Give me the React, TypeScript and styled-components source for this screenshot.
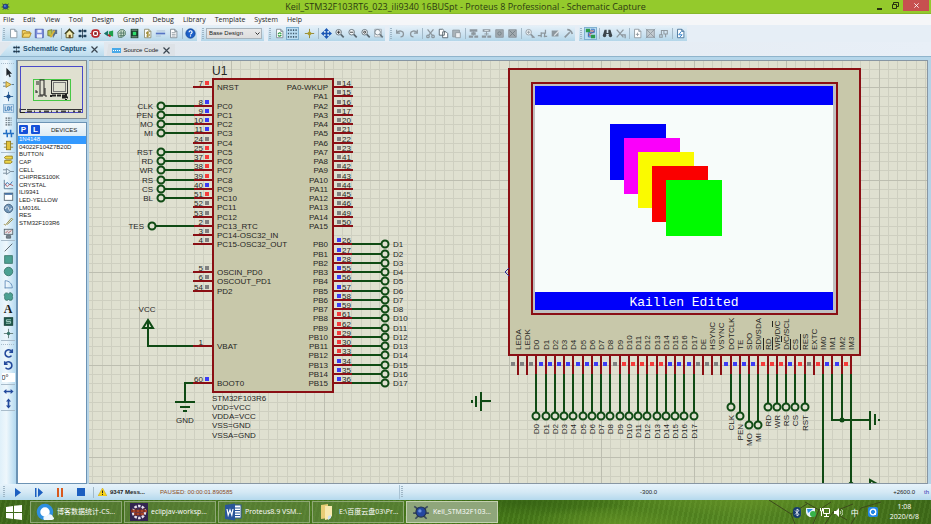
import React from "react";
import styled, { createGlobalStyle, css } from "styled-components";

const GlobalStyle = createGlobalStyle`
  * { box-sizing: border-box; }
  html, body, #root { height: 100%; }
  body { margin: 0; overflow: hidden; font-family: "Open Sans", "Noto Sans CJK SC", sans-serif; color: #1c1c1c; }
  button, input, select { font: inherit; color: inherit; }
  button { border: 0; padding: 0; background: none; }
  ul { margin: 0; padding: 0; list-style: none; }
`;

/* ---------- shell ---------- */

const Window = styled.div`
  display: flex;
  flex-direction: column;
  height: 100vh;
  background: #e6eef6;
`;

const TitleBar = styled.header`
  display: grid;
  grid-template-columns: 1fr auto 1fr;
  align-items: center;
  height: 14px;
  background: #94ca2c;
  border-bottom: 1px solid #86b72b;
`;

const Title = styled.h1`
  margin: 0;
  font-size: 9px;
  line-height: 13px;
  font-weight: 400;
  color: #2c3a12;
  white-space: nowrap;
`;

const TitleIcon = styled.span`
  display: flex;
  padding-left: 1px;
`;

const WindowControls = styled.div`
  display: flex;
  justify-content: flex-end;
  align-self: start;
  padding-right: 2px;
`;

const ControlButton = styled.button<{ $close?: boolean }>`
  display: flex;
  align-items: center;
  justify-content: center;
  width: ${(p) => (p.$close ? 26 : 16)}px;
  height: 11px;
  background: ${(p) => (p.$close ? "#c75050" : "transparent")};
`;

const MenuBar = styled.nav`
  display: flex;
  gap: 9px;
  height: 11px;
  padding-left: 3px;
  background: #f5f6f8;
`;

const MenuItem = styled.button`
  font-size: 7px;
  line-height: 11px;
  white-space: nowrap;
`;

const ToolbarRow = styled.div`
  display: flex;
  gap: 4px;
  height: 17px;
  padding: 1px 0 1px 2px;
`;

const ToolGroup = styled.div`
  display: flex;
  align-items: center;
  background: linear-gradient(#e4f0f8, #cfe4f2 50%, #b3d6e9);
`;

const Grip = styled.span`
  width: 2px;
  height: 12px;
  margin: 0 2px 0 1px;
  background: repeating-linear-gradient(#9fb6c6 0 1px, transparent 1px 2px);
`;

const Divider = styled.span`
  width: 1px;
  height: 11px;
  margin: 0 1px 0 2px;
  background: #a3b9c8;
`;

const Spacer = styled.span`
  width: 4px;
`;

const ToolButton = styled.button<{ $on?: boolean }>`
  display: flex;
  align-items: center;
  justify-content: center;
  width: 13px;
  height: 13px;
  ${(p) =>
    p.$on &&
    css`
      background: #b9dcf2;
      outline: 1px solid #7fb0d0;
      outline-offset: -1px;
    `}
`;

const DesignSelect = styled.select`
  appearance: none;
  width: 56px;
  height: 11px;
  margin-right: 2px;
  padding: 0 0 0 2px;
  border: 1px solid #a9b4bc;
  border-radius: 0;
  font-family: "Liberation Sans", sans-serif;
  font-size: 6px;
  line-height: 9px;
  background: linear-gradient(#e8e8e8, #dedede);
`;

const SelectBox = styled.label`
  display: flex;
  position: relative;
`;

const SelectArrow = styled.svg`
  position: absolute;
  right: 4px;
  top: 4px;
  pointer-events: none;
`;

const Tabs = styled.div`
  display: flex;
  align-items: flex-end;
  gap: 2px;
  height: 14px;
  background: linear-gradient(90deg, #e1e7ed, #e8eff7);
`;

const Tab = styled.div<{ $active?: boolean }>`
  display: flex;
  align-items: center;
  gap: 2px;
  height: ${(p) => (p.$active ? 14 : 12)}px;
  padding: ${(p) => (p.$active ? "0 6px 0 12px" : "0 5px 0 6px")};
  background: ${(p) => (p.$active ? "linear-gradient(#e3f2fb, #bcdcee)" : "#dde2e7")};
  clip-path: ${(p) =>
    p.$active ? "polygon(12px 0, 100% 0, 100% 100%, 0 100%)" : "polygon(2px 0, 100% 0, 100% 100%, 0 100%)"};
`;

const TabLabel = styled.button<{ $active?: boolean }>`
  font-family: "Liberation Sans", sans-serif;
  font-size: ${(p) => (p.$active ? 7 : 6)}px;
  font-weight: ${(p) => (p.$active ? 700 : 400)};
  line-height: 12px;
  color: ${(p) => (p.$active ? "#1f5273" : "#1c1c1c")};
  white-space: nowrap;
`;

const TabClose = styled.button`
  display: flex;
  margin-left: 3px;
`;

const TabStrip = styled.div`
  height: 4px;
  background: #b5d6ea;
  border-top: 1px solid #8fb4cc;
`;

const Main = styled.main`
  display: flex;
  flex: 1;
  min-height: 0;
  background: #b5d3e6;
`;

/* ---------- left side ---------- */

const Palette = styled.aside`
  width: 16px;
  flex: none;
  overflow: hidden;
  background: linear-gradient(90deg, #dff0fa, #eef7fc 40%, #b3d9f0);
`;

const PaletteGrip = styled.div`
  height: 3px;
  margin: 2px 1px 1px;
  background: repeating-linear-gradient(90deg, #a9bccb 0 1px, transparent 1px 2px) center / 100% 1px no-repeat;
`;

const PaletteGroup = styled.div<{ $height: number }>`
  display: grid;
  grid-auto-rows: 1fr;
  justify-items: center;
  align-items: center;
  height: ${(p) => p.$height}px;
  margin: 0 1px;
  border-bottom: 1px solid #a9bccb;
`;

const PaletteButton = styled(ToolButton)`
  height: 12px;
`;

const AngleInput = styled.input`
  width: 13px;
  height: 9px;
  padding: 0;
  border: 0;
  font-size: 7px;
  line-height: 9px;
  background: #fff;
`;

const Explorer = styled.section`
  display: flex;
  flex-direction: column;
  gap: 3px;
  width: 71px;
  flex: none;
  border-left: 1px solid #6c93b4;
`;

const Preview = styled.div`
  height: 59px;
  border: 1px solid #7f8c94;
  background: #dfe0d0;
`;

const DevicePanel = styled.div`
  flex: 1;
  border: 1px solid #6c93b4;
  background: #fff;
`;

const DeviceHead = styled.div`
  display: flex;
  align-items: center;
  gap: 3px;
  height: 13px;
  padding-left: 1px;
  background: linear-gradient(#f4f9fc, #dcebf4);
`;

const BlueButton = styled.button`
  width: 9px;
  height: 9px;
  border-radius: 1px;
  background: #1450d8;
  color: #fff;
  font-family: "Liberation Sans", sans-serif;
  font-size: 8px;
  font-weight: 700;
  line-height: 9px;
`;

const DeviceTitle = styled.h2`
  margin: 0 0 0 8px;
  font-family: "Liberation Sans", sans-serif;
  font-size: 6px;
  font-weight: 400;
`;

const DeviceList = styled.ul`
  display: grid;
  grid-auto-rows: 1fr;
  height: 91px;
`;

const DeviceRow = styled.button<{ $selected?: boolean }>`
  display: block;
  width: 100%;
  height: 100%;
  padding-left: 1px;
  text-align: left;
  font-family: "Liberation Sans", sans-serif;
  font-size: 6px;
  line-height: 7px;
  white-space: nowrap;
  color: ${(p) => (p.$selected ? "#fff" : "#1c1c1c")};
  background: ${(p) => (p.$selected ? "#3399ff" : "transparent")};
`;

const Canvas = styled.section`
  flex: 1;
  min-width: 0;
  margin: 0 3px 0 2px;
  border: 1px solid #8796a3;
  border-left: 0;
  overflow: hidden;
  background: #dfe0d0;
`;

const Sheet = styled.svg`
  display: block;
  width: 100%;
  height: 100%;
  font-family: "Liberation Sans", sans-serif;
  font-size: 8px;
  fill: #26261f;
`;

/* ---------- bottom ---------- */

const StatusBar = styled.footer`
  display: grid;
  grid-template-columns: 157px 1fr auto;
  align-items: center;
  height: 16px;
  padding: 0 2px;
  background: linear-gradient(#e6f3fb, #d5e9f5 50%, #b5d9ed);
  font-family: "Liberation Sans", sans-serif;
  font-size: 6px;
  line-height: 14px;
`;

const Transport = styled.div`
  display: flex;
  align-items: center;
`;

const PlayButton = styled.button`
  display: flex;
  justify-content: center;
  width: 21px;
`;

const Messages = styled.button`
  display: flex;
  align-items: center;
  gap: 3px;
  padding-left: 3px;
  font-weight: 700;
  white-space: nowrap;
`;

const StatusMiddle = styled.div`
  display: grid;
  grid-template-columns: 240px 1fr;
  align-items: center;
`;

const SimState = styled.span`
  padding-left: 1px;
  color: #8a4a1c;
`;

const CoordX = styled.span`
  display: flex;
  align-items: center;
  justify-content: space-between;
  padding-right: 236px;
  border-left: 1px solid #a9c3d4;
`;

const CoordY = styled.span`
  display: flex;
  gap: 9px;
`;

const Unit = styled.span`
  color: #3232b4;
`;

const Taskbar = styled.footer`
  position: relative;
  display: flex;
  align-items: center;
  gap: 2px;
  height: 24px;
  background:
    radial-gradient(90px 18px at 66% 100%, #6f9c2a99, transparent),
    radial-gradient(120px 14px at 56% 10%, #2f5a1299, transparent),
    radial-gradient(140px 16px at 80% 0, #6a962999, transparent),
    repeating-linear-gradient(102deg, #ffffff08 0 2px, #00000010 2px 5px),
    linear-gradient(90deg, #3f6b1a, #4b7c1f 30%, #467a18 55%, #578a22 80%, #3f6c18);
  color: #fff;
`;

const Branches = styled.svg`
  position: absolute;
  right: 30px;
  top: 0;
`;

const StartButton = styled.button`
  display: flex;
  justify-content: center;
  width: 28px;
`;

const TaskButton = styled.button<{ $active?: boolean }>`
  display: flex;
  align-items: center;
  gap: 3px;
  width: 92px;
  height: 22px;
  padding: 0 2px 0 5px;
  border: 1px solid ${(p) => (p.$active ? "#c3d0b0" : "#8fa876")};
  background: ${(p) => (p.$active ? "#8fa67b" : "#65874680")};
  font-size: 7px;
  line-height: 20px;
  white-space: nowrap;
`;

const TaskText = styled.span`
  flex: none;
`;

const Tray = styled.div`
  position: relative;
  display: flex;
  align-items: center;
  margin-left: auto;
  padding-right: 12px;
`;

const TrayButton = styled.button`
  display: flex;
  align-items: center;
  justify-content: center;
  width: 14px;
  height: 14px;
  font-size: 8px;
`;

const TrayWide = styled(TrayButton)`
  width: 18px;
`;

const Clock = styled.time`
  display: grid;
  margin-left: 8px;
  font-size: 7px;
  line-height: 10px;
  text-align: center;
`;

/* ---------- icons ---------- */

const G = "#8d979e";
const D = "#3d464c";

const page = (c: string) => <path d="M3 1.5h5l2.5 2.5v7.5h-7.5z M8 1.5v2.5h2.5" fill="#fff" stroke={c} />;
const lens = (c: string, inner?: React.ReactNode) => (
  <g fill="none" stroke={c}>
    <circle cx="5.5" cy="5" r="3.3" fill="#f3f7fa" />
    <path d="M8 7.5l3.5 3.5" strokeWidth="2" />
    {inner}
  </g>
);
const blocks = (extra: React.ReactNode) => (
  <g fill={G}>
    <path d="M2 1.5h9v3H2zM1 9h5v2.500H1zM7.500 9h4.500v2.500H7.500z" />
    <path d="M6.500 4v5M4 7h5" stroke={G} />
    {extra}
  </g>
);
const ladder = (
  <g>
    <path d="M6.5 1v11" stroke="#223d55" />
    <path d="M2 2h3v3h-3zM8 2h3v3h-3zM2 8h3v3h-3zM8 8h3v3h-3z" fill="#28567a" />
    <path d="M2 3.5h9M2 9.5h9" stroke="#12222e" />
  </g>
);

const icons: Record<string, React.ReactNode> = {
  new: page("#8494a0"),
  open: <path d="M1.5 11V3h4l1 1.5h4V6M1.5 11l2-5h8.500l-2 5z" fill="#f5d465" stroke="#a98425" />,
  save: (
    <g>
      <path d="M1.500 1.500h9.500v10h-9.500z" fill="#7d8fdc" stroke="#4a5bab" />
      <path d="M4 2h5v3.500h-5zM3.500 7.500h6v4h-6z" fill="#edf0fb" />
    </g>
  ),
  close: (
    <g>
      <path d="M1 3l5-1v8l-5-1z" fill="#b7c34a" stroke="#6b7330" />
      <path d="M7 2h5v5h-2l-3 5z" fill="#59708a" />
      <path d="M4 11l5-8" stroke="#d9b53b" strokeWidth="2" />
    </g>
  ),
  home: (
    <g>
      <path d="M2.500 6.500V11.500h8V6.500L6.500 2z" fill="#f4edb4" stroke="#4f4a1b" />
      <path d="M1 7l5.500-5.500L12 7" fill="none" stroke="#3c3d17" strokeWidth="1.500" />
      <path d="M5.500 8h2.500v4h-2.500z" fill="#684a20" />
    </g>
  ),
  ladder,
  pcb: (
    <g>
      <rect x="2.500" y="2.500" width="8" height="8" rx="3" fill="#fff" stroke="#b8262b" strokeWidth="2" />
      <rect x="5" y="5" width="3" height="3" fill="#7c1c21" />
      <path d="M0 6.500h2M11 6.500h2" stroke="#b8262b" />
    </g>
  ),
  viewer: (
    <g>
      <path d="M1 6.500l5-3.500v7z" fill="#1a7466" />
      <path d="M7 4l5-1v7l-5-1z" fill="#20a04c" />
      <path d="M6 8l3 2" stroke="#b8262b" strokeWidth="2" />
    </g>
  ),
  gerber: (
    <g fill="none" stroke="#4a7463">
      <path d="M2 5l3-3h4l2 2v4l-4 3H3z" fill="#cfe0cf" />
      <path d="M3 6h7M4 9h6M6 3v8M9 3v6" />
    </g>
  ),
  chip: (
    <g>
      <rect x="2" y="1" width="9" height="11" fill="#1c3d2d" />
      <path d="M4.500 4.500h4v4h-4z" fill="#2fe06c" />
      <path d="M3 2.500h7M3 10.500h7" stroke="#9db8a8" />
    </g>
  ),
  bill: (
    <g>
      {page("#8a8a6a")}
      <path d="M8.500 5h-3v2h3v2.500h-3.500M6.700 4v7" fill="none" stroke="#957f20" />
    </g>
  ),
  code: (
    <g>
      <path d="M2 3.500h10" stroke="#a8bed0" />
      <path d="M1 6.500h11" stroke="#5674c4" strokeWidth="2" />
      <path d="M1 9.500h6" stroke="#a8bed0" />
    </g>
  ),
  notes: (
    <g>
      {page("#7a868e")}
      <path d="M4.500 5.500h4.500M4.500 7.500h4.500M4.500 9.500h4.500" stroke="#8d979e" />
    </g>
  ),
  help: (
    <g>
      <circle cx="6.500" cy="6.500" r="5.500" fill="#1b5fc9" stroke="#174a97" />
      <path d="M4.800 5c0-2.300 3.600-2.300 3.600 0 0 1.400-1.900 1.400-1.900 2.700M6.500 8.700v1.300" fill="none" stroke="#fff" strokeWidth="1.400" />
    </g>
  ),
  redraw: (
    <g>
      {page("#7a868e")}
      <path d="M5 7.500c0-2 3-2.500 3.500-.5M8.500 8c-.5 2-3 2-3.500.500" fill="none" stroke="#2d9a44" strokeWidth="1.500" />
    </g>
  ),
  grid: <path d="M1 2.500h11M1 6.500h11M1 10.500h11" stroke="#3f586b" strokeWidth="2" strokeDasharray="1.500 1.500" />,
  origin: (
    <g>
      <path d="M6.500 1v11M1 6.500h11" stroke="#8b7a22" />
      <path d="M6.500 3.500l3 3-3 3-3-3z" fill="#a99b2c" />
    </g>
  ),
  pan: (
    <g>
      <path d="M6.500 2v9M2 6.500h9" stroke="#1c57b5" strokeWidth="2" />
      <path d="M6.500 0l3 3.500h-6zM6.500 13l3-3.500h-6zM0 6.500l3.500-3v6zM13 6.500l-3.500-3v6z" fill="#1c57b5" />
    </g>
  ),
  zoomIn: lens("#5b6972", <path d="M3.500 5h4M5.500 3v4" stroke="#222" />),
  zoomOut: lens("#5b6972", <path d="M3.500 5h4" stroke="#222" />),
  zoomAll: lens("#5b6972", <circle cx="5.500" cy="5" r="1.200" stroke="#222" />),
  zoomArea: (
    <g>
      <path d="M2 1.500h8v9h-8z" fill="#fff" stroke="#9aa6ae" />
      {lens("#6a7982")}
    </g>
  ),
  undo: <path d="M2 2v4h4M2.500 5.500c2-3 7.500-2.500 7.500 1.500 0 2-1.500 3.500-3.500 3.500" fill="none" stroke={G} strokeWidth="1.500" />,
  redo: <path d="M11 2v4H7M10.500 5.500C8.500 2.500 3 3 3 7c0 2 1.500 3.500 3.500 3.500" fill="none" stroke={G} strokeWidth="1.500" />,
  cut: (
    <g fill="none" stroke={G} strokeWidth="1.500">
      <path d="M3 1.500l5.500 7M10 1.500l-5.500 7" />
      <circle cx="3.500" cy="10" r="1.500" />
      <circle cx="9.500" cy="10" r="1.500" />
    </g>
  ),
  copy: <path d="M1.500 1.500h4l2 2v5h-6zM5.500 4.500h4l2 2v5h-6z" fill="#fff" stroke="#4d5b66" />,
  paste: (
    <g>
      <path d="M2 2.500h8v8h-8z" fill="#aab3b9" stroke={G} />
      <path d="M5.500 5.500h5.500v6h-5.500z" fill="#eef1f3" stroke={G} />
    </g>
  ),
  blkCopy: blocks(<path d="M4 5h5v3H4z" />),
  blkMove: blocks(<path d="M4 2.500h5v1H4z" fill="#e3eaee" />),
  blkRotate: (
    <g>
      <path d="M2 2h9v9h-9z" fill="#a0a9af" stroke={G} />
      <circle cx="6.500" cy="6.500" r="2" fill="none" stroke="#727c83" />
    </g>
  ),
  blkDelete: (
    <g>
      <path d="M2 2h9v9h-9z" fill="#a0a9af" stroke={G} />
      <path d="M3 3l7 7M10 3l-7 7" stroke="#727c83" />
    </g>
  ),
  pick: lens(G, <path d="M3.500 5h4M5.500 3v4M9 11h4" stroke={G} />),
  make: <path d="M1 9h4M5 5v6M5 6h5v-4M8 10h4M9 6v5" fill="none" stroke={G} strokeWidth="1.500" />,
  pack: (
    <g>
      <path d="M2 3h8v7h-8z" fill={G} />
      <path d="M5 9l6-6" stroke="#e0e5e8" strokeWidth="1.500" />
    </g>
  ),
  decompose: <path d="M2 11l6-6M5 2c3 0 5 2 6 5" fill="none" stroke={G} strokeWidth="2" />,
  autoroute: (
    <g>
      <path d="M1 1h5v4h-5zM7 8h5v4h-5z" fill="#2a9a4b" />
      <path d="M6 3.500h4c2 2-6 3-6 5h3" fill="none" stroke="#b3393d" />
      <path d="M7 1.500h4v4h-7v5h3" fill="none" stroke="#2c62b5" />
    </g>
  ),
  find: (
    <g fill={D}>
      <path d="M3 2h2.500v4h2V2H10l2 7H8V7H5v2H1z" />
      <circle cx="3" cy="9" r="2" />
      <circle cx="10" cy="9" r="2" />
    </g>
  ),
  assign: <path d="M2 2l8 9M10 2L2 11M8 8h4v4" fill="none" stroke={G} strokeWidth="1.500" />,
  addSheet: (
    <g>
      {page(G)}
      <path d="M4.500 7.500h4M6.500 5.500v4" stroke={G} />
    </g>
  ),
  delSheet: <path d="M2 2h9v9h-9zM1 1l11 11M12 1L1 12" fill="#c3cbd0" stroke={G} />,
  parent: <path d="M2 8h3v3h-3zM7 3h4v4h-4zM4 8V3h3M9 7v4" fill="none" stroke={G} strokeWidth="1.200" />,
  netlist: (
    <g>
      {page("#3d6b93")}
      <path d="M7.500 4l-3 4h4l-3 3" fill="none" stroke="#1974c9" />
    </g>
  ),
  select: <path d="M4 1v9.500l2.200-2 1.600 3.500 1.500-.7-1.600-3.300h3z" fill="#20262b" />,
  component: (
    <g>
      <path d="M3.500 3v7l6-3.500z" fill="#efd268" stroke="#a38423" />
      <path d="M0 4.500h3M0 8.500h3M10 6.500h3" stroke="#4a6c87" />
    </g>
  ),
  junction: (
    <g>
      <path d="M6.500 1v11M1 6.500h11" stroke="#245a91" />
      <circle cx="6.500" cy="6.500" r="2.500" fill="#1d4f8c" />
    </g>
  ),
  label: (
    <g fill="none" stroke="#2b6cab">
      <rect x="0.500" y="2" width="12" height="9" fill="#d3e6f5" stroke="#7ba7cc" />
      <path d="M2.500 4v5h2M5.500 4.500h2V8.500h-2zM11 4.500H9.500v4H11" />
    </g>
  ),
  script: <path d="M3 2.500h7M3 5h7M3 8h7M3 10.500h7" stroke="#56626b" strokeWidth="1.300" strokeDasharray="2 1" />,
  bus: <path d="M0 6.500h13M4 2v4.500M9 2v4.500M5 7v4M10 7v4" fill="none" stroke="#2470c4" strokeWidth="1.800" />,
  sub: (
    <g>
      <rect x="4" y="1.500" width="5" height="10" fill="#e2c23a" stroke="#8f7a1c" />
      <path d="M1 4.500h3M1 8.500h3M9 4.500h3M9 8.500h3" stroke="#8f7a1c" />
    </g>
  ),
  terminal: <path d="M3.500 2.500h7.500v3.500h-7.500l-2-1.700zM2 7.500h7l2 1.700-2 1.800H2z" fill="#efd84a" stroke="#8f7a1c" />,
  pin: <path d="M0 4.500h4M0 8.500h4M4 3l5 3.500L4 10zM9 6.500h4" fill="none" stroke="#6d8191" />,
  graph: (
    <g fill="none">
      <path d="M1.500 1v10.500H12" stroke="#50748f" />
      <path d="M2 8l3-4 3 3 3-4" stroke="#2b6cab" />
      <path d="M2 5l3 4 3-3 4 2" stroke="#b5555c" />
    </g>
  ),
  popup: (
    <g>
      <rect x="1.500" y="2.500" width="10" height="8.500" fill="#fff" stroke="#50606b" />
      <path d="M2 3.500h9" stroke="#3d6aa0" strokeWidth="2" />
    </g>
  ),
  generator: (
    <g fill="none">
      <circle cx="6.500" cy="6.500" r="5" fill="#6e93b5" stroke="#41607d" />
      <path d="M3 7c1-4 3-3 3.500-.5s2.500 3 3.500-.5" stroke="#fff" />
    </g>
  ),
  probe: <path d="M1 10.500c1-2 2 2 3-1l6-7 1.500 1.500-6.500 6" fill="none" stroke="#8f8031" />,
  meter: (
    <g>
      <rect x="1.500" y="1.500" width="10" height="6" fill="#dfe6ea" stroke="#54626c" />
      <path d="M3 6l3-3M6 6l4-3" stroke="#b5555c" />
      <path d="M4 9h5v3h-5z" fill="#7b8790" stroke="#54626c" />
    </g>
  ),
  line: <path d="M2 11l9-9" stroke="#4a5359" />,
  box: <rect x="2" y="2" width="9" height="9" fill="#4ca192" stroke="#377368" />,
  circle: <circle cx="6.500" cy="6.500" r="5" fill="#4ca192" stroke="#377368" />,
  arc: <path d="M2.500 11V2c5 0 8.500 4 8.500 8.500H2" fill="none" stroke="#5a87b5" />,
  path: <path d="M6.500 3.500c-1.500-2-5-1.500-5 1.500 0 1 .5 1.500.5 1.500s-1 4.500 2.500 4.500c1.200 0 2-1 2-1s1 1 2.500 1C12 11 11.500 7 11 6.500c1-2-.5-4.500-2.500-4.500-1.200 0-2 1.500-2 1.500z" fill="#4ca192" stroke="#377368" />,
  symbol: (
    <g>
      <rect x="1.500" y="2" width="10" height="9" fill="#1d5a4b" stroke="#153c33" />
      <path d="M9.500 4.500h-5.500v2h5v2h-5.500" fill="none" stroke="#b8ded3" />
    </g>
  ),
  marker: (
    <g>
      <path d="M6.500 1v11M1 6.500h11" stroke="#5b7470" />
      <circle cx="6.500" cy="6.500" r="2" fill="#377368" />
    </g>
  ),
  cw: <path d="M10 4C7.500.5 2.500 2.500 2.500 6.500S8 12 10 9M11 1.500v3.500H7.500" fill="none" stroke="#234a9c" strokeWidth="1.800" />,
  ccw: <path d="M3 4c2.500-3.500 7.500-1.500 7.500 2.500S5 12 3 9M2 1.500v3.500h3.500" fill="none" stroke="#234a9c" strokeWidth="1.800" />,
  flipH: <path d="M0.500 6.500l3.500-3v2h5v-2l3.500 3-3.500 3v-2H4v2z" fill="#234a9c" />,
  flipV: <path d="M6.500.5l3 3.500h-2v5h2l-3 3.500-3-3.500h2V4h-2z" fill="#234a9c" />,
};

const Icon = ({ name, size = 11 }: { name: string; size?: number }) => (
  <svg width={size} height={size} viewBox="0 0 13 13" aria-hidden="true">
    {icons[name]}
  </svg>
);

const LetterTool = styled(PaletteButton)`
  font-family: "Liberation Serif", serif;
  font-size: 12px;
  font-weight: 700;
  line-height: 12px;
`;

const Tools = ({ items, on }: { items: string[]; on?: string }) => (
  <>
    {items.map((t, i) =>
      t === "|" ? <Divider key={i} /> : t === " " ? <Spacer key={i} /> : (
        <ToolButton key={i} $on={t === on} aria-label={t}>
          <Icon name={t} />
        </ToolButton>
      )
    )}
  </>
);

const PaletteTools = ({ items, height }: { items: string[]; height: number }) => (
  <PaletteGroup $height={height}>
    {items.map((t) =>
      t === "text" ? (
        <LetterTool key={t}>A</LetterTool>
      ) : (
        <PaletteButton key={t} aria-label={t}>
          <Icon name={t} />
        </PaletteButton>
      )
    )}
  </PaletteGroup>
);

const Cross = ({ size = 7, color = "#3b4650" }: { size?: number; color?: string }) => (
  <svg width={size} height={size} viewBox="0 0 7 7" aria-hidden="true">
    <path d="M.5.5l6 6M6.500.5l-6 6" stroke={color} strokeWidth="1.200" />
  </svg>
);

/* ---------- schematic ---------- */

const RED = "#8a0f14";
const WIRE = "#0f4a14";
const level: Record<string, string> = { r: "#f53b3b", b: "#3b3bf5", g: "#808080" };

const gx = (k: number) => Math.round(508.700 + 9.250 * k);
const gy = (k: number) => Math.round(87.200 + 9.250 * k);

type Pin = [slot: number, name: string, num: string, state: string, net?: string];

const leftPins: Pin[] = [
  [0, "NRST", "7", "r"],
  [2, "PC0", "8", "b", "CLK"],
  [3, "PC1", "9", "b", "PEN"],
  [4, "PC2", "10", "b", "MO"],
  [5, "PC3", "11", "b", "MI"],
  [6, "PC4", "24", "g"],
  [7, "PC5", "25", "r", "RST"],
  [8, "PC6", "37", "r", "RD"],
  [9, "PC7", "38", "r", "WR"],
  [10, "PC8", "39", "r", "RS"],
  [11, "PC9", "40", "b", "CS"],
  [12, "PC10", "51", "r", "BL"],
  [13, "PC11", "52", "g"],
  [14, "PC12", "53", "g"],
  [15, "PC13_RTC", "2", "g", "TES"],
  [16, "PC14-OSC32_IN", "3", "g"],
  [17, "PC15-OSC32_OUT", "4", "g"],
  [20, "OSCIN_PD0", "5", "g"],
  [21, "OSCOUT_PD1", "6", "g"],
  [22, "PD2", "54", "g"],
  [28, "VBAT", "1", ""],
  [32, "BOOT0", "60", "b"],
];

const paNums = [14, 15, 16, 17, 20, 21, 22, 23, 41, 42, 43, 44, 45, 46, 49, 50];
const pbNums = [26, 27, 28, 55, 56, 57, 58, 59, 61, 62, 29, 30, 33, 34, 35, 36];
const pbNets = [1, 2, 3, 4, 5, 6, 7, 8, 10, 11, 12, 13, 14, 15, 16, 17];

const rightPins: Pin[] = [
  ...paNums.map((n, i): Pin => [i, i === 0 ? "PA0-WKUP" : `PA${i}`, `${n}`, "g"]),
  ...pbNums.map((n, i): Pin => [17 + i, `PB${i}`, `${n}`, "bbbbbbbbrrrrrbbb"[i], `D${pbNets[i]}`]),
];

const lcdNames = [
  "LEDA", "LEDK", ...Array.from({ length: 18 }, (_, i) => `D${i}`),
  "DE", "HSYNC", "VSYNC", "DOTCLK", "TE", "SDO", "SDI/SDA", "RD", "WR/D/C", "D/C/SCL", "CS", "RES", "EXTC",
  "IM0", "IM1", "IM2", "IM3",
];
const lcdStates = "ggg" + "bbbbbbbb" + "g" + "rrrrr" + "bbb" + "ggg" + "bbbb" + "rrrbrg" + "rbbr";
const lcdBars: Record<string, [number, number][]> = {
  RD: [[0, 12]],
  "WR/D/C": [[0, 13], [23, 29]],
  "D/C/SCL": [[8, 14]],
  CS: [[0, 11]],
  RES: [[0, 16]],
};
const lcdNets: [slot: number, net: string, y: number][] = [
  ...Array.from({ length: 18 }, (_, i): [number, string, number] => [3 + i, `D${i}`, 416]),
  [24, "CLK", 407], [25, "PEN", 416], [26, "MO", 425], [27, "MI", 425],
  [28, "RD", 407], [29, "WR", 407], [30, "RS", 407], [31, "CS", 407], [32, "RST", 407],
];

const Node = ({ x, y }: { x: number; y: number }) => (
  <circle cx={x} cy={y} r="3.500" fill="#dfe0d0" stroke={WIRE} strokeWidth="2" />
);

const GridLines = () => (
  <g shapeRendering="crispEdges">
    {[false, true].map((major) =>
      Array.from({ length: 260 }, (_, i) => i - 50).filter((k) => (k % 10 === 0) === major).map((k) => (
        <path
          key={k}
          d={`M${gx(k) + 0.5} 0V2000M0 ${gy(k) + 0.5}H3000`}
          stroke={major ? "#bdbeb0" : "#cecfc0"}
        />
      ))
    )}
  </g>
);

const Mcu = () => (
  <g>
    <text x="212" y="75" fontSize="12">U1</text>
    <rect x="213" y="79" width="120" height="313" fill="#c8c8aa" stroke={RED} strokeWidth="2" />
    {leftPins.map(([k, name, num, state, net]) => {
      const y = gy(k);
      const nx = net === "TES" ? 152 : 161;
      return (
        <g key={name}>
          <path d={`M193 ${y}H212`} stroke={RED} strokeWidth="2" />
          <text x="217" y={y + 3}>{name}</text>
          <text x="203" y={y - 1} textAnchor="end">{num}</text>
          {state && <rect x="205" y={y - 6} width="4" height="4" fill={level[state]} />}
          {net && (
            <>
              <path d={`M${nx + 4} ${y}H194`} stroke={WIRE} strokeWidth="2" />
              <Node x={nx} y={y} />
              <text x={nx - 8} y={y + 3} textAnchor="end">{net}</text>
            </>
          )}
        </g>
      );
    })}
    {rightPins.map(([k, name, num, state, net]) => {
      const y = gy(k);
      return (
        <g key={name}>
          <path d={`M334 ${y}H353`} stroke={RED} strokeWidth="2" />
          <text x="328" y={y + 3} textAnchor="end">{name}</text>
          <text x="342" y={y - 1}>{num}</text>
          <rect x="337" y={y - 6} width="4" height="4" fill={level[state]} />
          {net && (
            <>
              <path d={`M352 ${y}H381`} stroke={WIRE} strokeWidth="2" />
              <Node x={385} y={y} />
              <text x="393" y={y + 3}>{net}</text>
            </>
          )}
        </g>
      );
    })}
    {["STM32F103R6", "VDD=VCC", "VDDA=VCC", "VSS=GND", "VSSA=GND"].map((t, i) => (
      <text key={t} x="212" y={gy(34 + i) - 1}>{t}</text>
    ))}
    <g fill="none" stroke={WIRE} strokeWidth="2">
      <path d="M193 346H148V320M148 320l-5 8h10z" />
      <path d="M193 383H185V402M175 402h20M180 407h10M183 411h4" />
    </g>
    <text x="147" y="312" textAnchor="middle">VCC</text>
    <text x="185" y="423" textAnchor="middle">GND</text>
  </g>
);

const Display = () => (
  <g>
    <rect x="509" y="69" width="351" height="286" fill="#c8c8aa" stroke={RED} strokeWidth="2" />
    <rect x="532" y="83" width="305" height="231" fill="#c0c0c0" stroke={RED} strokeWidth="2" />
    <rect x="535" y="86" width="298" height="224" fill="#f7fcfa" />
    <rect x="535" y="86" width="298" height="19" fill="#0000fa" />
    <rect x="535" y="292" width="298" height="18" fill="#0000fa" />
    {["#0000fa", "#fa00fa", "#fafa00", "#fa0000", "#00fa00"].map((c, i) => (
      <rect key={c} x={610 + 14 * i} y={124 + 14 * i} width="56" height="56" fill={c} />
    ))}
    <text x="684" y="306" textAnchor="middle" fontFamily="Liberation Mono, monospace" fontSize="13" fill="#fff">
      Kaillen Edited
    </text>
    <path d="M509 268l-4 4 4 4" fill="none" stroke="#2b2b9a" />
    {lcdNames.map((name, i) => {
      const x = gx(i + 1);
      return (
        <g key={name}>
          <path d={`M${x} 356V375`} stroke={RED} strokeWidth="2" />
          <rect x={x - 7} y="362" width="4" height="4" fill={level[lcdStates[i]]} />
          <g transform={`translate(${x + 3} 350) rotate(-90)`}>
            <text>{name}</text>
            {(lcdBars[name] || []).map(([a, b]) => (
              <path key={a} d={`M${a} -7.500H${b}`} stroke="#26261f" />
            ))}
          </g>
        </g>
      );
    })}
    {lcdNets.map(([k, net, y]) => (
      <g key={k}>
        <path d={`M${gx(k)} 374V${y - 4}`} stroke={WIRE} strokeWidth="2" />
        <Node x={gx(k)} y={y} />
        <text transform={`translate(${gx(k) + 3} ${y + 8}) rotate(-90)`} textAnchor="end">{net}</text>
      </g>
    ))}
    <g fill="none" stroke={WIRE} strokeWidth="2">
      <path d={`M${gx(34)} 374V900M${gx(37)} 374V900M${gx(35)} 374V420H870M${gx(36)} 374V420`} />
      <path d="M870 411v19M875 414v11M879 419v2" />
      <path d="M481 392v19M481 401h10M476 396v11M472 400v3" />
      <path d="M870 490v-10l9 5" />
    </g>
    <circle cx={gx(36)} cy="420" r="2.500" fill={WIRE} />
    <circle cx={gx(37)} cy="484" r="2.500" fill={WIRE} />
  </g>
);

const Overview = () => (
  <svg width="68" height="57" viewBox="18 61 68 57" fill="none" aria-hidden="true">
    <rect x="20.500" y="66.500" width="62" height="46" stroke="#4a4ac8" />
    <rect x="33.500" y="79.500" width="37" height="21" stroke="#45c845" />
    <rect x="40" y="80" width="4" height="15" stroke="#222" />
    <path d="M36 82h3M36 84h3M36 92h2M45 88v8h2M38 96h5M36 90v3" stroke="#222" />
    <rect x="51.500" y="80.500" width="16" height="13" stroke="#333" />
    <rect x="53.500" y="82.500" width="12" height="9" stroke="#777" />
    <path d="M52 95.500h15M50 96h2M62 97.500h6M66 94v6" stroke="#222" strokeWidth="2" strokeDasharray="4 1" />
    <path d="M21 109.500h5M27 109.500h55" stroke="#333" />
    <path d="M27 111.500h54" stroke="#444" strokeWidth="2" strokeDasharray="5 2 1 4 2 3" />
    <path d="M20 108.500v4h5" stroke="#222" />
  </svg>
);

/* ---------- page ---------- */

const menus = ["File", "Edit", "View", "Tool", "Design", "Graph", "Debug", "Library", "Template", "System", "Help"];
const devices = [
  "1N4148", "04022F104Z7B20D", "BUTTON", "CAP", "CELL", "CHIPRES100K", "CRYSTAL", "ILI9341", "LED-YELLOW",
  "LM016L", "RES", "STM32F103R6",
];

const Bug = ({ size }: { size: number }) => (
  <svg width={size} height={size} viewBox="0 0 16 16" aria-hidden="true">
    <path d="M2 3l4 3M14 3l-4 3M1 9h4M15 9h-4M3 14l3-3M13 14l-3-3" stroke="#3b4a5c" strokeWidth="1.500" />
    <circle cx="8" cy="8" r="4.500" fill="#2447a0" stroke="#23324f" />
    <circle cx="7" cy="7" r="1.500" fill="#6c93dc" />
  </svg>
);

const taskIcons = {
  cloud: (
    <svg width="18" height="18" viewBox="0 0 18 18" aria-hidden="true">
      <circle cx="9" cy="9" r="6.500" fill="#fff" stroke="#2e8fe0" strokeWidth="3.500" />
      <path d="M8 17c-2-3 1-5 3-4 1-3 6-2 6 1 2 1 1 3-1 3z" fill="#eef6fd" />
    </svg>
  ),
  eclipse: (
    <svg width="18" height="18" viewBox="0 0 18 18" aria-hidden="true">
      <rect width="18" height="18" fill="#322550" />
      <circle cx="9" cy="9" r="6" fill="#3a2c5c" stroke="#e6e1ec" strokeWidth="2.500" strokeDasharray="2.500 1.300" />
      <path d="M1 8h16M4 11h10" stroke="#a8442a" strokeWidth="2.500" />
      <path d="M2 6v3M6 5v4M10 5v4M14 5v4M6 10v3M10 10v3" stroke="#5d1f18" />
    </svg>
  ),
  word: (
    <svg width="18" height="18" viewBox="0 0 18 18" aria-hidden="true">
      <rect x="9" y="2" width="8" height="13" fill="#fff" stroke="#2a5699" />
      <path d="M11 5h5M11 7.500h5M11 10h5M11 12.500h5" stroke="#2a5699" />
      <path d="M1 2l10-1.500v17L1 16z" fill="#2a5699" />
      <path d="M3 6l1.200 6L6 7l1.800 5L9 6" fill="none" stroke="#fff" strokeWidth="1.200" />
    </svg>
  ),
  folder: (
    <svg width="18" height="18" viewBox="0 0 18 18" aria-hidden="true">
      <path d="M3 2l7-1v14l-7 1z" fill="#e8cd76" />
      <path d="M7 3h7v10l-3 3-4 1z" fill="#f8e9ae" />
      <path d="M10 13l3-1v3l-3 2z" fill="#cfe2ee" />
    </svg>
  ),
  bug: <Bug size={18} />,
};

const tasks: { icon: keyof typeof taskIcons; text: string }[] = [
  { icon: "cloud", text: "博客数据统计-CS..." },
  { icon: "eclipse", text: "eclipjav-worksp..." },
  { icon: "word", text: "Proteus8.9 VSM..." },
  { icon: "folder", text: "E:\\百度云盘03\\Pr..." },
  { icon: "bug", text: "Keil_STM32F103..." },
];

export default function App() {
  return (
    <Window>
      <GlobalStyle />
      <TitleBar>
        <TitleIcon><Bug size={9} /></TitleIcon>
        <Title>Keil_STM32F103RT6_023_ili9340 16BUSpt - Proteus 8 Professional - Schematic Capture</Title>
        <WindowControls>
          <ControlButton aria-label="Minimize">
            <svg width="5" height="8"><path d="M0 7h5" stroke="#27320f" strokeWidth="2" /></svg>
          </ControlButton>
          <ControlButton aria-label="Restore">
            <svg width="7" height="7" fill="none" stroke="#27320f"><path d="M1.500 2V.5h5v4H5M.5 2.500h4v4h-4z" /></svg>
          </ControlButton>
          <ControlButton $close aria-label="Close"><Cross size={5} color="#fff" /></ControlButton>
        </WindowControls>
      </TitleBar>

      <MenuBar>
        {menus.map((m) => <MenuItem key={m}>{m}</MenuItem>)}
      </MenuBar>

      <ToolbarRow>
        <ToolGroup>
          <Grip />
          <Tools items={["new", "open", "save", "close", "|", "home", "ladder", "pcb", "viewer", "gerber", "chip", "bill", "code", "notes", "|", "help"]} />
        </ToolGroup>
        <ToolGroup>
          <Grip />
          <SelectBox>
            <DesignSelect aria-label="Design variant" defaultValue="Base Design">
              <option>Base Design</option>
            </DesignSelect>
            <SelectArrow width="5" height="4" viewBox="0 0 5 4"><path d="M.5.5l2 2 2-2" fill="none" stroke="#333" /></SelectArrow>
          </SelectBox>
        </ToolGroup>
        <ToolGroup>
          <Grip />
          <Tools on="grid" items={["redraw", "grid", " ", "origin", "|", "pan", "zoomIn", "zoomOut", "zoomAll", "zoomArea"]} />
        </ToolGroup>
        <ToolGroup>
          <Grip />
          <Tools items={["undo", "redo", "|", "cut", "copy", "paste", "|", "blkCopy", "blkMove", "blkRotate", "blkDelete", "|", "pick", "make", "pack", "decompose"]} />
        </ToolGroup>
        <ToolGroup>
          <Grip />
          <Tools on="autoroute" items={["autoroute", "|", "find", "assign", "|", "addSheet", "delSheet", "parent", "|", "netlist"]} />
        </ToolGroup>
      </ToolbarRow>

      <Tabs>
        <Tab $active>
          <Icon name="ladder" size={9} />
          <TabLabel $active>Schematic Capture</TabLabel>
          <TabClose aria-label="Close Schematic Capture"><Cross /></TabClose>
        </Tab>
        <Tab>
          <svg width="9" height="5" viewBox="0 0 9 5" aria-hidden="true">
            <rect width="9" height="5" fill="#49a9e8" />
            <path d="M1 2.500h7" stroke="#fff" strokeDasharray="1 1" />
          </svg>
          <TabLabel>Source Code</TabLabel>
          <TabClose aria-label="Close Source Code"><Cross /></TabClose>
        </Tab>
      </Tabs>
      <TabStrip />

      <Main>
        <Palette>
          <PaletteGrip />
          <PaletteTools height={87} items={["select", "component", "junction", "label", "script", "bus", "sub"]} />
          <PaletteTools height={88} items={["terminal", "pin", "graph", "popup", "generator", "probe", "meter"]} />
          <PaletteTools height={100} items={["line", "box", "circle", "arc", "path", "text", "symbol", "marker"]} />
          <PaletteGrip />
          <PaletteGroup $height={38}>
            <PaletteButton aria-label="Rotate clockwise"><Icon name="cw" /></PaletteButton>
            <PaletteButton aria-label="Rotate anticlockwise"><Icon name="ccw" /></PaletteButton>
            <AngleInput aria-label="Angle" defaultValue="0°" />
          </PaletteGroup>
          <PaletteTools height={26} items={["flipH", "flipV"]} />
        </Palette>

        <Explorer>
          <Preview><Overview /></Preview>
          <DevicePanel>
            <DeviceHead>
              <BlueButton aria-label="Pick devices">P</BlueButton>
              <BlueButton aria-label="Library manager">L</BlueButton>
              <DeviceTitle>DEVICES</DeviceTitle>
            </DeviceHead>
            <DeviceList>
              {devices.map((d, i) => (
                <li key={d}><DeviceRow $selected={i === 0}>{d}</DeviceRow></li>
              ))}
            </DeviceList>
          </DevicePanel>
        </Explorer>

        <Canvas>
          <Sheet>
            <g transform="translate(-89 -61)">
              <GridLines />
              <Mcu />
              <Display />
            </g>
          </Sheet>
        </Canvas>
      </Main>

      <StatusBar>
        <Transport>
          <Grip />
          <PlayButton aria-label="Play"><svg width="6" height="9"><path d="M0 0l6 4.500-6 4.500z" fill="#1c5fc0" /></svg></PlayButton>
          <PlayButton aria-label="Step"><svg width="8" height="9"><path d="M0 0h1.500v9H0zM3 0l5 4.500-5 4.500z" fill="#1c5fc0" /></svg></PlayButton>
          <PlayButton aria-label="Pause"><svg width="6" height="9"><path d="M0 0h2v9H0zM4 0h2v9H4z" fill="#d9591c" /></svg></PlayButton>
          <PlayButton aria-label="Stop"><svg width="8" height="8"><path d="M0 0h8v8H0z" fill="#1c5fc0" /></svg></PlayButton>
          <Divider />
          <Messages>
            <svg width="9" height="8" viewBox="0 0 9 8" aria-hidden="true">
              <path d="M4.500 0L9 8H0z" fill="#f7d51c" stroke="#c79c10" strokeWidth=".5" />
              <path d="M4.500 2.500v2.700M4.500 6v1" stroke="#222" />
            </svg>
            9347 Mess...
          </Messages>
        </Transport>
        <StatusMiddle>
          <SimState>PAUSED: 00:00:01.890585</SimState>
          <CoordX><Grip />-300.0</CoordX>
        </StatusMiddle>
        <CoordY>+2600.0<Unit>th</Unit></CoordY>
      </StatusBar>

      <Taskbar>
        <Branches width="150" height="24" viewBox="0 0 150 24" fill="none" stroke="#3c4a1c" aria-hidden="true">
          <path d="M18 0l22 14 4 10M40 14l16-10M62 24l6-14 12-8M68 10l-14-8M74 24l8-12 20-8M82 12l14 8M100 24l10-16 20-6" />
        </Branches>
        <StartButton aria-label="Start">
          <svg width="16" height="15" viewBox="0 0 16 15">
            <path d="M0 2l7-1v6H0zM8 .8L16 0v7H8zM0 8h7v6l-7-1zM8 8h8v7l-8-1z" fill="#fff" />
          </svg>
        </StartButton>
        {tasks.map((t) => (
          <TaskButton key={t.icon} $active={t.icon === "bug"}>
            {taskIcons[t.icon]}
            <TaskText>{t.text}</TaskText>
          </TaskButton>
        ))}
        <Tray>
          <TrayButton aria-label="Bluetooth">
            <svg width="8" height="11" viewBox="0 0 8 11">
              <rect width="8" height="11" rx="4" fill="#173c6e" />
              <path d="M2 3.500l4 4-2 1.500v-7l2 1.500-4 4" fill="none" stroke="#fff" strokeWidth=".8" />
            </svg>
          </TrayButton>
          <TrayButton aria-label="Security">
            <svg width="10" height="10" viewBox="0 0 10 10">
              <path d="M0 1h9v4c0 3-3 5-4.500 5S0 8 0 5z" fill="#e9f3fb" />
              <path d="M1 2h6l-5 4z" fill="#2e8fe0" />
              <circle cx="7" cy="7" r="3" fill="#37b34a" />
            </svg>
          </TrayButton>
          <TrayButton aria-label="Network">
            <svg width="10" height="10" viewBox="0 0 10 10" fill="none" stroke="#fff"><path d="M3.500 1.500h6v5h-6zM6.500 7v2.500M4 9.500h5M.5 1v3h2v-3M1.500 4v5" /></svg>
          </TrayButton>
          <TrayButton aria-label="Volume">
            <svg width="9" height="9" viewBox="0 0 9 9"><path d="M0 3h2l3-3v9L2 6H0z" fill="#fff" /><path d="M6 3c1 1 1 2 0 3M7.500 1.500c2 2 2 4 0 6" fill="none" stroke="#fff" strokeWidth=".8" /></svg>
          </TrayButton>
          <TrayWide>中</TrayWide>
          <TrayWide aria-label="Browser">
            <svg width="10" height="10" viewBox="0 0 10 10"><rect width="10" height="10" rx="2" fill="#2387e8" /><circle cx="5" cy="5" r="2.800" fill="none" stroke="#fff" strokeWidth="1.300" /><path d="M6 6l2 2" stroke="#fff" /></svg>
          </TrayWide>
          <Clock dateTime="2020-06-08T01:08"><span>1:08</span><span>2020/6/8</span></Clock>
        </Tray>
      </Taskbar>
    </Window>
  );
}
